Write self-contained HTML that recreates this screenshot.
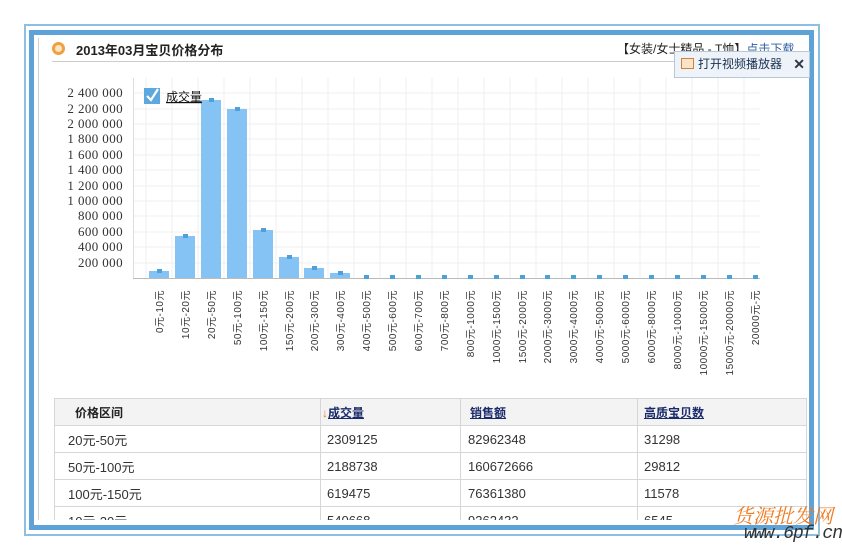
<!DOCTYPE html>
<html><head><meta charset="utf-8"><style>
body{margin:0;width:842px;height:558px;background:#fff;position:relative;overflow:hidden;font-family:"Liberation Sans","Noto Sans CJK SC",sans-serif;}
.a{position:absolute}
table{border-collapse:collapse;font-size:13px;color:#333;table-layout:fixed}
td,th{border:1px solid #d6d6d6;height:26px;padding:0;text-align:left;vertical-align:middle;white-space:nowrap}
th{background:#f3f3f3;font-weight:bold;color:#222;font-size:12px}
th a{color:#1a2a6a;text-decoration:underline}
td:nth-child(1){padding-left:13px}td:nth-child(2){padding-left:6px}td:nth-child(3){padding-left:7px}td:nth-child(4){padding-left:6px}
</style></head><body>
<div class="a" style="left:24px;top:24px;width:792px;height:508px;border:2px solid #8dbfe3"></div>
<div class="a" style="left:29px;top:30px;width:775px;height:490px;border:5px solid #5ea3d7"></div>
<div class="a" style="left:38px;top:38px;width:1px;height:482px;background:#cfcfcf"></div>
<div class="a" style="left:52px;top:42px;width:13px;height:13px;border-radius:50%;background:#f0a040"></div>
<div class="a" style="left:55px;top:45px;width:7px;height:7px;border-radius:50%;background:#fde6c0"></div>
<div class="a" style="left:76px;top:40px;font-size:13px;font-weight:bold;color:#222">2013年03月宝贝价格分布</div>
<div class="a" style="left:52px;top:61px;width:756px;height:1px;background:#ccc"></div>
<div class="a" style="left:617px;top:40px;font-size:12px;color:#222">【女装/女士精品 - T恤】<span style="color:#3060a0;text-decoration:underline">点击下载</span></div>
<div class="a" style="left:674px;top:51px;width:134px;height:25px;background:#eef3f9;border:1px solid #b8c8d8;font-size:12px;color:#1a3050;line-height:25px">
<span style="display:inline-block;width:11px;height:9px;border:1px solid #d08040;background:#fbe3c8;margin:0 4px 0 6px;vertical-align:-1px"></span>打开视频播放器<span style="position:absolute;right:4px;font-weight:bold;color:#334;font-size:14px">✕</span></div>
<svg class="a" style="left:0;top:0" width="842" height="400">
<g stroke="#efefef" stroke-width="1">
<line x1="146" y1="78" x2="146" y2="278"/><line x1="172" y1="78" x2="172" y2="278"/><line x1="198" y1="78" x2="198" y2="278"/><line x1="224" y1="78" x2="224" y2="278"/><line x1="250" y1="78" x2="250" y2="278"/><line x1="276" y1="78" x2="276" y2="278"/><line x1="302" y1="78" x2="302" y2="278"/><line x1="328" y1="78" x2="328" y2="278"/><line x1="354" y1="78" x2="354" y2="278"/><line x1="380" y1="78" x2="380" y2="278"/><line x1="406" y1="78" x2="406" y2="278"/><line x1="432" y1="78" x2="432" y2="278"/><line x1="458" y1="78" x2="458" y2="278"/><line x1="484" y1="78" x2="484" y2="278"/><line x1="510" y1="78" x2="510" y2="278"/><line x1="536" y1="78" x2="536" y2="278"/><line x1="562" y1="78" x2="562" y2="278"/><line x1="588" y1="78" x2="588" y2="278"/><line x1="614" y1="78" x2="614" y2="278"/><line x1="640" y1="78" x2="640" y2="278"/><line x1="666" y1="78" x2="666" y2="278"/><line x1="692" y1="78" x2="692" y2="278"/><line x1="718" y1="78" x2="718" y2="278"/><line x1="744" y1="78" x2="744" y2="278"/>
<line x1="133" y1="93" x2="760" y2="93"/><line x1="133" y1="109" x2="760" y2="109"/><line x1="133" y1="124" x2="760" y2="124"/><line x1="133" y1="139" x2="760" y2="139"/><line x1="133" y1="155" x2="760" y2="155"/><line x1="133" y1="170" x2="760" y2="170"/><line x1="133" y1="186" x2="760" y2="186"/><line x1="133" y1="201" x2="760" y2="201"/><line x1="133" y1="216" x2="760" y2="216"/><line x1="133" y1="232" x2="760" y2="232"/><line x1="133" y1="247" x2="760" y2="247"/><line x1="133" y1="263" x2="760" y2="263"/>
</g>
<line x1="133.5" y1="78" x2="133.5" y2="278" stroke="#ddd"/>
<line x1="133" y1="278.5" x2="760" y2="278.5" stroke="#bbb"/>
<g font-family="Liberation Serif,serif" font-size="13" fill="#333" text-anchor="end" letter-spacing="0.4">
<text x="123" y="97">2 400 000</text><text x="123" y="113">2 200 000</text><text x="123" y="128">2 000 000</text><text x="123" y="143">1 800 000</text><text x="123" y="159">1 600 000</text><text x="123" y="174">1 400 000</text><text x="123" y="190">1 200 000</text><text x="123" y="205">1 000 000</text><text x="123" y="220">800 000</text><text x="123" y="236">600 000</text><text x="123" y="251">400 000</text><text x="123" y="267">200 000</text>
</g>
<g fill="#86c3f5">
<rect x="149" y="271" width="20" height="7"/><rect x="175" y="236" width="20" height="42"/><rect x="201" y="100" width="20" height="178"/><rect x="227" y="109" width="20" height="169"/><rect x="253" y="230" width="20" height="48"/><rect x="279" y="257" width="20" height="21"/><rect x="304" y="268" width="20" height="10"/><rect x="330" y="273" width="20" height="5"/>
</g>
<g fill="#4f9fd9">
<rect x="157" y="269" width="5" height="4"/><rect x="183" y="234" width="5" height="4"/><rect x="209" y="98" width="5" height="4"/><rect x="235" y="107" width="5" height="4"/><rect x="261" y="228" width="5" height="4"/><rect x="287" y="255" width="5" height="4"/><rect x="312" y="266" width="5" height="4"/><rect x="338" y="271" width="5" height="4"/>
<rect x="364" y="275" width="5" height="4"/><rect x="390" y="275" width="5" height="4"/><rect x="416" y="275" width="5" height="4"/><rect x="442" y="275" width="5" height="4"/><rect x="468" y="275" width="5" height="4"/><rect x="494" y="275" width="5" height="4"/><rect x="520" y="275" width="5" height="4"/><rect x="545" y="275" width="5" height="4"/><rect x="571" y="275" width="5" height="4"/><rect x="597" y="275" width="5" height="4"/><rect x="623" y="275" width="5" height="4"/><rect x="649" y="275" width="5" height="4"/><rect x="675" y="275" width="5" height="4"/><rect x="701" y="275" width="5" height="4"/><rect x="727" y="275" width="5" height="4"/><rect x="753" y="275" width="5" height="4"/>
</g>
<g font-size="10" fill="#333" text-anchor="end" font-family="Liberation Sans,Noto Sans CJK SC,sans-serif" letter-spacing="0.5">
<text transform="translate(163,290) rotate(-90)">0元-10元</text>
<text transform="translate(189,290) rotate(-90)">10元-20元</text>
<text transform="translate(215,290) rotate(-90)">20元-50元</text>
<text transform="translate(241,290) rotate(-90)">50元-100元</text>
<text transform="translate(267,290) rotate(-90)">100元-150元</text>
<text transform="translate(293,290) rotate(-90)">150元-200元</text>
<text transform="translate(318,290) rotate(-90)">200元-300元</text>
<text transform="translate(344,290) rotate(-90)">300元-400元</text>
<text transform="translate(370,290) rotate(-90)">400元-500元</text>
<text transform="translate(396,290) rotate(-90)">500元-600元</text>
<text transform="translate(422,290) rotate(-90)">600元-700元</text>
<text transform="translate(448,290) rotate(-90)">700元-800元</text>
<text transform="translate(474,290) rotate(-90)">800元-1000元</text>
<text transform="translate(500,290) rotate(-90)">1000元-1500元</text>
<text transform="translate(526,290) rotate(-90)">1500元-2000元</text>
<text transform="translate(551,290) rotate(-90)">2000元-3000元</text>
<text transform="translate(577,290) rotate(-90)">3000元-4000元</text>
<text transform="translate(603,290) rotate(-90)">4000元-5000元</text>
<text transform="translate(629,290) rotate(-90)">5000元-6000元</text>
<text transform="translate(655,290) rotate(-90)">6000元-8000元</text>
<text transform="translate(681,290) rotate(-90)">8000元-10000元</text>
<text transform="translate(707,290) rotate(-90)">10000元-15000元</text>
<text transform="translate(733,290) rotate(-90)">15000元-20000元</text>
<text transform="translate(759,290) rotate(-90)">20000元-元</text>
</g>
<rect x="144" y="88" width="16" height="16" fill="#5ea8e0"/>
<path d="M147 96 L151 100 L158 89" stroke="#fff" stroke-width="2.2" fill="none"/>
<text x="166" y="101" font-size="12" fill="#111" text-decoration="underline">成交量</text>
</svg>
<div class="a" style="left:54px;top:398px;width:753px;height:122px;overflow:hidden">
<table style="width:752px">
<colgroup><col style="width:266px"><col style="width:140px"><col style="width:177px"><col style="width:169px"></colgroup>
<tr><th style="padding-left:20px">价格区间</th><th style="padding-left:1px"><span style="color:#e08020">↓</span><a>成交量</a></th><th style="padding-left:9px"><a>销售额</a></th><th style="padding-left:6px"><a>高质宝贝数</a></th></tr>
<tr><td>20元-50元</td><td>2309125</td><td>82962348</td><td>31298</td></tr>
<tr><td>50元-100元</td><td>2188738</td><td>160672666</td><td>29812</td></tr>
<tr><td>100元-150元</td><td>619475</td><td>76361380</td><td>11578</td></tr>
<tr><td>10元-20元</td><td>540668</td><td>9362432</td><td>6545</td></tr>
</table></div>
<div class="a" style="left:733px;top:500px;font-size:20px;color:#f07a20;font-style:italic;font-family:'Noto Serif CJK SC',serif">货源批发网</div>
<div class="a" style="left:744px;top:524px;font-size:18px;color:#333;font-style:italic;font-family:'Liberation Mono',monospace;letter-spacing:-1px">www.6pf.cn</div>
</body></html>
